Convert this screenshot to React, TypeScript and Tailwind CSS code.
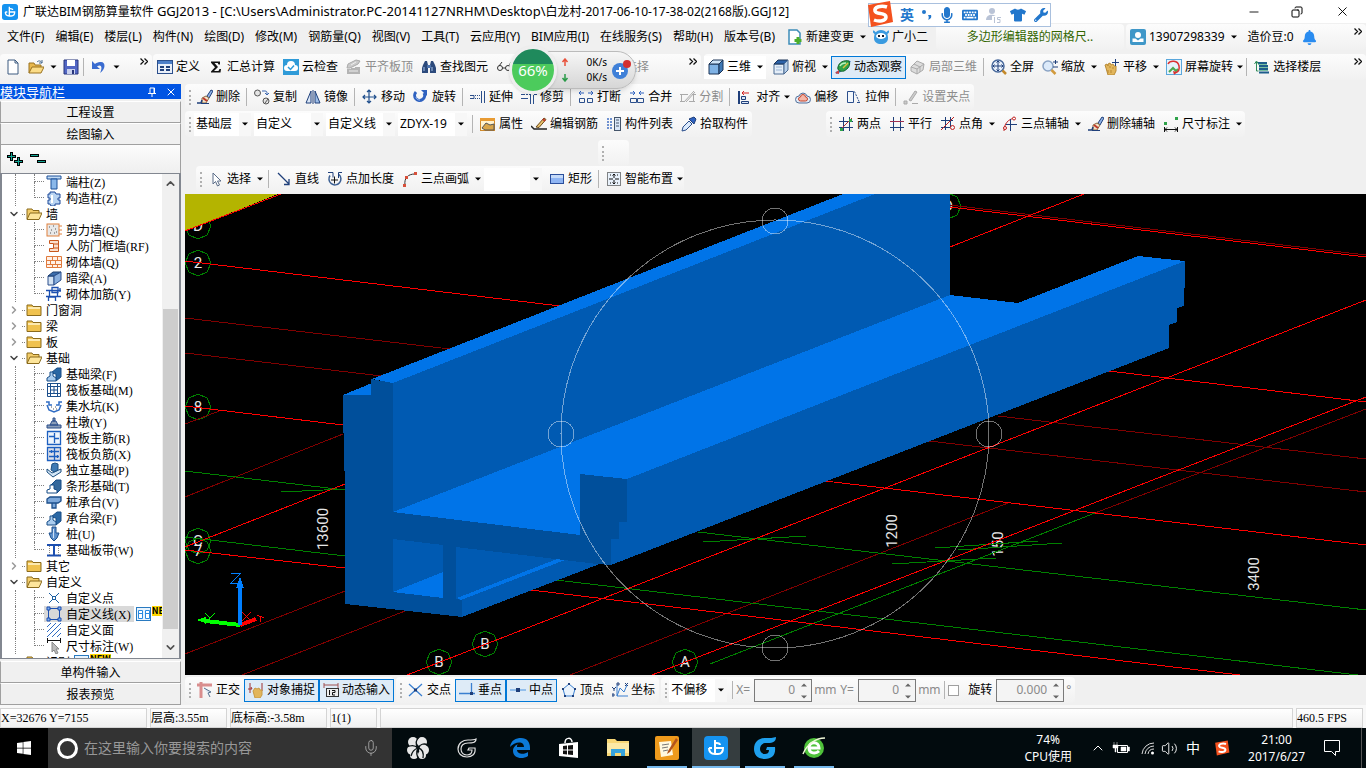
import type { ReactNode } from "react";
import { FaMicrophone, FaKeyboard, FaWrench, FaTshirt, FaWindows, FaBell } from "react-icons/fa";
import { Mic, ChevronUp, ChevronDown, ChevronRight, Volume2, Minus, X, Copy } from "lucide-react";

const navy = "#1f3f7a";

const icons: Record<string, ReactNode> = {
  define: (
    <>
      <rect x="0.5" y="1.5" width="15" height="13" fill="#e8eef8" stroke="#2b4f8c" />
      <path d="M1 3.5h14" stroke="#4d7fc8" strokeWidth="3" />
      <path d="M3 8h4M3 11h4M9 8h4M9 11h4" stroke={navy} strokeWidth="2" />
    </>
  ),
  sigma: <path d="M3 2.500h9v3h-1.500l-.8-1.500H6.500L10 8l-4 4h4.500l1-2H13l-.5 3.500H3V12.500L7 8.200 3 3.800z" fill="#111" />,
  cloudcheck: (
    <>
      <rect width="16" height="16" fill="#2f9bd8" />
      <path d="M4 12a3 3 0 0 1 0-6 4 4 0 0 1 8 0 3 3 0 0 1 0 6z" fill="#fff" />
      <path d="M5 8l2.500 2.500L11 6.500" stroke="#2f9bd8" strokeWidth="1.500" fill="none" />
    </>
  ),
  slab: (
    <>
      <path d="M2 5l8-4 4 1-2 3-8 4H1z" fill="#cacaca" stroke="#aaa" />
      <path d="M1 10h4v-1h4V8h5v7H1z" fill="#b4b4b4" />
      <path d="M3 12h9M5 6l5-3" stroke="#eee" />
    </>
  ),
  find: (
    <>
      <path d="M2 6l2-4h2l1 4v8H1V9zM14 6l-2-4h-2L9 6v8h6V9z" fill="#2c4a7c" />
      <path d="M6 6h4v3H6z" fill="#4d73ad" />
      <path d="M3 8v4M11 8v4" stroke="#a9c4ea" />
    </>
  ),
  glasses: (
    <g fill="none" stroke="#333">
      <circle cx="4" cy="9" r="2.500" />
      <circle cx="12" cy="9" r="2.500" />
      <path d="M6.500 9h3M3 7l3-4M13 7l2-4" />
    </g>
  ),
  cube: (
    <>
      <path d="M1 5h10v10H1z" fill="#7fb2e5" stroke="#1c3556" />
      <path d="M1 5l4-4h10l-4 4z" fill="#cfe4f8" stroke="#1c3556" />
      <path d="M11 5l4-4v10l-4 4z" fill="#3f78b5" stroke="#1c3556" />
    </>
  ),
  top: (
    <>
      <path d="M1 5h10v10H1z" fill="#e5eef8" stroke="#4a6b92" />
      <path d="M1 5l4-4h10l-4 4z" fill="#2c62a8" stroke="#1c3556" />
      <path d="M11 5l4-4v10l-4 4z" fill="#b8d0ea" stroke="#4a6b92" />
      <path d="M3 8h6M3 11h6" stroke="#9bb6d5" />
    </>
  ),
  orbit: (
    <>
      <path d="M1 14c3-1 9-4 14-12" stroke="#2d6ec4" strokeWidth="2" fill="none" />
      <path d="M3 8c1-5 6-7 11-6 2 4-1 8-5 10-4 1-7-1-6-4z" fill="#2fa34a" stroke="#14602a" />
      <path d="M5 7c1-2 3-3 6-3" stroke="#b9f2c0" strokeWidth="1.500" fill="none" />
      <path d="M8 9l5-5" stroke="#e0c040" strokeWidth="1.500" />
      <path d="M0 14l4-3v4z" fill="#c44" />
    </>
  ),
  part3d: (
    <>
      <path d="M1 8l6-6 7 3-1 6-6 4-6-3z" fill="#ddd" stroke="#aaa" />
      <path d="M1 8l6 2 7-5M7 10v5M4 5l6 3v5" stroke="#aaa" fill="none" />
    </>
  ),
  full: (
    <>
      <circle cx="7" cy="7" r="6" fill="#eaf2fc" stroke="#48699c" strokeWidth="1.500" />
      <path d="M7 2v10M2 7h10M5.500 3.500L7 2l1.500 1.500M5.500 10.500L7 12l1.500-1.500M3.500 5.500L2 7l1.500 1.500M10.500 5.500L12 7l-1.500 1.500" stroke={navy} fill="none" />
      <path d="M11.500 11.500l3.500 3.500" stroke="#c48a2c" strokeWidth="2.500" />
    </>
  ),
  zoom: (
    <>
      <circle cx="6" cy="7" r="5" fill="#dceafa" stroke="#8aa3c4" strokeWidth="1.500" />
      <path d="M9.500 11l4 4" stroke="#d19a3d" strokeWidth="2.500" />
      <path d="M11 3h5M13.500 1v4M11 8h5" stroke={navy} />
    </>
  ),
  pan: (
    <>
      <path d="M2 9l-1-3 2-1 1 2V5l2-1 1 2 2-1 1 2 2 0v5l-2 4H4z" fill="#e2b65c" stroke="#b98a35" />
      <path d="M4 11v3M7 11v3M6 7v2M9 8v2" stroke="#b98a35" />
      <path d="M11.500 0v7M8 3.500h7" stroke={navy} />
    </>
  ),
  screenrot: (
    <>
      <rect x="0.500" y="0.500" width="15" height="15" fill="#e6f3fb" stroke="#5aa7dc" />
      <path d="M3 13l4-4 3 3 2-2" stroke="#4ea64e" strokeWidth="2" fill="none" />
      <path d="M2 5C4 1 12 1 13 7c1 4-1 6-4 7" stroke="#dc3030" strokeWidth="1.500" fill="none" />
      <path d="M7 12l1 4 3-3z" fill="#dc3030" />
    </>
  ),
  floors: (
    <>
      <path d="M4 4h9M5 7h9M5 10h9M5 13.500h10" stroke="#1d5d8c" strokeWidth="2" />
      <path d="M2.500 3v9h2M0.500 5l2-3 2 3" stroke="#2f8a5a" fill="none" />
      <path d="M4 5.500h9M5 8.500h9M5 11.500h9" stroke="#7ac0a0" />
    </>
  ),
  broom: (
    <>
      <path d="M10 7l4-6 2 1-4 7z" fill="#8fb2e6" stroke={navy} />
      <path d="M5 9l4-2 3 2-3 5H5z" fill="#f3e3c8" stroke="#8a6a43" />
      <path d="M6 9l4 3" stroke="#c0392b" strokeWidth="2" />
      <path d="M0 14h4l1-3" stroke={navy} strokeWidth="1.500" fill="none" />
      <path d="M4 14.500h8" stroke={navy} />
    </>
  ),
  copy: (
    <g fill="#e4e4e4" stroke="#555">
      <circle cx="3.500" cy="4" r="3" />
      <circle cx="12" cy="12" r="3" />
      <path d="M11 14l3-4" />
      <path d="M8 2h3c2 0 2 1 2 3M11 4l2 2 2-2" fill="none" stroke="#3a66b0" />
    </g>
  ),
  mirror: (
    <>
      <path d="M6 2v12H1z" fill="#dbe7f7" stroke={navy} />
      <path d="M10 2v12h5z" fill="#9dbde6" stroke={navy} />
      <path d="M8 1v14" stroke={navy} />
    </>
  ),
  move: <path d="M7 1v13M1 8h13M5 3l2-2 2 2M5 12l2 2 2-2M3 6L1 8l2 2M12 6l2 2-2 2" stroke="#1f4e8c" strokeWidth="1.200" fill="none" />,
  rotate: (
    <>
      <path d="M3 3a5 5 0 1 0 8 1" stroke="#2f62c0" strokeWidth="3" fill="none" />
      <path d="M8 1h6v6z" fill="#2f62c0" />
      <path d="M3 8c0 2 2 3 4 3" stroke="#9cbcf0" fill="none" />
    </>
  ),
  extend: <path d="M0 6.500h4v3H0M5 6.500h1M7 6.500h1M9 6.500h1M5 9.500h1M7 9.500h1M9 9.500h1M11.500 2v12M14.500 2v12" stroke="#2b4f8c" fill="none" />,
  trim: <path d="M0 5.500h4M5 5.500h2M8 5.500h2M0 9.500h7M9.500 6v9M12.500 6v9M13 5.500h3" stroke="#2b4f8c" fill="none" />,
  break: (
    <>
      <path d="M1.500 9.500h5v4h-5zM9.500 9.500h5v4h-5z" stroke="#2b4f8c" fill="none" />
      <path d="M1 4h5M10 4h5M3 2L1 4l2 2M13 2l2 2-2 2" stroke="#2f62c0" fill="none" />
    </>
  ),
  merge: (
    <>
      <path d="M1.500 9.500h6v4h-6zM8.500 9.500h6v4h-6z" stroke="#2b4f8c" fill="none" />
      <path d="M1 4h5M10 4h5M4 2l2 2-2 2M12 2l-2 2 2 2" stroke="#2f62c0" fill="none" />
    </>
  ),
  split: <path d="M0 5.500h8M1.500 6v6M0 12.500h4M9 12.500h6M13.500 6v6M4 13L14 2M6 13l9-10M12 5.500h4" stroke="#aaa" fill="none" />,
  align: (
    <>
      <path d="M2 2v13" stroke={navy} strokeWidth="2" />
      <path d="M4.500 7.500h4v3h-4zM4.500 12.500h7v2h-7z" fill="#dbe7f7" stroke={navy} />
      <path d="M5 4h7M7 2L5 4l2 2" stroke="#d02020" fill="none" />
    </>
  ),
  offset: (
    <>
      <path d="M4 14a3.500 3.500 0 0 1 0-7 4.200 4.200 0 0 1 8 0 3.500 3.500 0 0 1 0 7z" fill="#e3ecf7" stroke="#52719c" />
      <path d="M5.500 12a2 2 0 0 1 0-4 2.500 2.500 0 0 1 5 0 2 2 0 0 1 0 4z" fill="#f5b7a8" stroke="#c4452d" />
    </>
  ),
  stretch: (
    <>
      <path d="M1.500 13.500v-11h6v11zM11 13.500h3" stroke="#2b4f8c" fill="#f3f7fc" />
      <path d="M8.500 2.500l5 11" stroke="#2b4f8c" strokeDasharray="2 1" />
    </>
  ),
  grip: <path d="M1 12h3v3H1zM6 11l6-9 2 1-6 9zM9 14.500h6" fill="#ccc" stroke="#aaa" />,
  props: (
    <>
      <rect x="0.500" y="2.500" width="14" height="12" fill="#fff2cf" stroke="#d08a2c" />
      <path d="M0 3.500h15" stroke="#e89b33" strokeWidth="3" />
      <path d="M2 12l4-5 4 2 4-1v6H5z" fill="#d9a549" stroke="#555" />
    </>
  ),
  rebar: (
    <>
      <path d="M0 10l3 3h13" stroke="#222" strokeWidth="1.500" fill="none" />
      <path d="M5 11l8-9 2 1.500-7 8z" fill="#e8c06a" stroke="#6b4a1c" />
      <path d="M12 3l2 2" stroke="#c0392b" strokeWidth="2" />
    </>
  ),
  list: (
    <>
      <path d="M1 3h2M4 3h2M1 6h2M4 6h2M1 9h2M4 9h2M1 12h2M4 12h2" stroke="#4472c4" strokeWidth="1.500" />
      <rect x="8.500" y="1.500" width="6" height="13" fill="#dbe7f7" stroke="#44546a" />
      <path d="M10 4h3M10 7h3M10 10h3" stroke="#44546a" />
    </>
  ),
  pick: (
    <>
      <path d="M1 15l1-4 6-6 3 3-6 6z" fill="#dbeafc" stroke="#2b4f8c" />
      <path d="M8 3l5 5 2-5-2-2z" fill="#2f62c0" stroke={navy} />
    </>
  ),
  twopt: (
    <>
      <path d="M5.500 1v14M11.500 1v14M1 5.500h14M1 11.500h14" stroke={navy} />
      <path d="M2 14L14 2" stroke="#b03030" />
      <path d="M2 12h3v3H2zM11 3h3v3h-3z" fill="#2fa34a" />
    </>
  ),
  parallel: (
    <>
      <path d="M4.500 1v14M11.500 1v14M1 11.500h14" stroke={navy} />
      <path d="M1 5.500h14" stroke="#a03050" />
    </>
  ),
  ptangle: (
    <>
      <path d="M5.500 1v13M10.500 1v10M1 4.500h12M1 11.500h9" stroke={navy} />
      <path d="M1 14L14 1" stroke="#c02020" />
      <circle cx="12.500" cy="11.500" r="2" fill="none" stroke="#c02020" />
    </>
  ),
  threeaux: (
    <>
      <path d="M2 15C2 8 6 3 13 2" stroke="#c02020" fill="none" />
      <circle cx="12" cy="2.500" r="1.500" fill="#fff" stroke="#c02020" />
      <circle cx="3" cy="12" r="1.500" fill="#fff" stroke="#c02020" />
      <path d="M8.500 3v12M4 8.500h11" stroke={navy} />
    </>
  ),
  dims: (
    <>
      <path d="M1.500 11v5M14.500 11v5M2 13.500h12M4 11.500l-2 2 2 2M12 11.500l2 2-2 2" stroke="#111" fill="none" />
      <path d="M1 6h3v3H1zM12 1h3v3h-3z" fill="#2fa34a" />
    </>
  ),
  cursor: <path d="M5 2v11l2.500-2.500L9.500 15l2-1-2-4H13z" fill="#fff" stroke="#5b6d88" />,
  line: <path d="M2 2l11 11M13 8v5.500H8" stroke={navy} strokeWidth="1.300" fill="none" />,
  addlen: (
    <>
      <path d="M3 4.500a6 6 0 1 0 9-1" fill="none" stroke="#3b5f93" strokeWidth="1.500" />
      <path d="M7.500 5.500v7M4 9h7" stroke="#111" />
      <path d="M1 1.500h5v5M11.500 7V1.500H15" stroke={navy} fill="none" />
    </>
  ),
  arc: (
    <>
      <path d="M3 14C2 7 6 3 13 3" stroke="#333" fill="none" />
      <path d="M1 13h3v3H1zM3 5h3v3H3zM12 1h3v3h-3z" fill="#d7503a" />
    </>
  ),
  rect: (
    <>
      <rect x="1.500" y="3.500" width="13" height="9" fill="#8fb5f3" stroke="#2b4f9c" />
      <path d="M2 4h12v3H2z" fill="#c5daf8" />
    </>
  ),
  smart: (
    <>
      <rect x="1.500" y="1.500" width="13" height="13" fill="#e8f1fb" stroke="#111" strokeDasharray="1 1" />
      <path d="M8 3v4M8 9v4M3 8h4M9 8h4M6.500 4.500L8 3l1.500 1.500M6.500 11.500L8 13l1.500-1.500M4 4h1M11 4h1M4 12h1M11 12h1" stroke="#111" fill="none" />
    </>
  ),
  ortho: (
    <>
      <path d="M0 3h15M4 0v16" stroke="#d98e8e" strokeWidth="3" />
      <path d="M7 6l7 4-3 1 2 4" fill="#dfe8f3" stroke="#55708f" />
    </>
  ),
  snap: (
    <>
      <path d="M2 1v10M14 1v8M0 7h4l-1-2" stroke="#a03030" fill="none" />
      <path d="M5 9l2-3 2 1 2-1 1 2 2 0v5l-2 3H7z" fill="#e2b65c" stroke="#c79a45" />
    </>
  ),
  dyn: (
    <>
      <path d="M1 6V1M15 6V1M1 3h14" stroke="#a05050" />
      <rect x="3.500" y="6.500" width="12" height="8" fill="#eee" stroke="#333" />
      <path d="M6.500 8v5M9 8.500h3v2H9.500V13H12" stroke="#111" fill="none" />
    </>
  ),
  cross: (
    <>
      <path d="M1 2l13 12M14 2L1 14" stroke="#3a7fd0" strokeWidth="1.300" />
      <path d="M6 6.500h3v3H6z" fill={navy} />
    </>
  ),
  perp: (
    <>
      <path d="M0 11.500h16M12.500 1v11" stroke="#3a7fd0" strokeWidth="1.300" />
      <path d="M11 10h3v3h-3z" fill={navy} />
    </>
  ),
  mid: (
    <>
      <path d="M0 8h16" stroke="#7ab0e8" strokeWidth="1.500" />
      <path d="M6 6h4v4H6z" fill={navy} />
    </>
  ),
  vertex: (
    <>
      <path d="M8 2l6 5-2 7H4L2 7z" fill="#eaf3fc" stroke="#3a7fd0" />
      <path d="M7 1h2v2H7zM13 6h2v2h-2zM1 6h2v2H1zM3 13h2v2H3zM11 13h2v2h-2z" fill={navy} />
    </>
  ),
  coord: (
    <>
      <path d="M5 3v11h11M5 14l3-8 4 4 3-7" stroke="#3a7fd0" fill="none" />
      <path d="M0 5l2 2v2M4 5L2 7M5 1h2v2H5zM0 12h2v2H0zM13 1l3 3M16 1l-3 3" stroke={navy} fill="none" />
    </>
  ),
  newfile: <path d="M3 1h7l3 3v11H3zM10 1v3h3" fill="#fff" stroke="#3c5a80" />,
  open: (
    <>
      <path d="M1 14V4h5l1 2h6v3" fill="#e8b84e" stroke="#9a7320" />
      <path d="M1 14l3-6h12l-3 6z" fill="#fbdc87" stroke="#9a7320" />
      <path d="M9 3c2-2 4-1 5 1M14 1v3h-3" stroke="#44688f" fill="none" />
    </>
  ),
  save: (
    <>
      <path d="M1 1h14v14H1z" fill="#5266c4" stroke="#26347a" />
      <path d="M4 1h8v6H4z" fill="#fff" />
      <path d="M4 10h8v5H4z" fill="#c9d1ee" />
      <path d="M9 11h2v4H9z" fill="#26347a" />
    </>
  ),
  undo: <path d="M1 2v8h8L6 7.500C10 4.500 12 8 9 14c6-4 6-12 0-11C7 3 5 4 4 5z" fill="#3a6cd0" />,
  change: (
    <>
      <path d="M2 1h8l3 3v11H2z" fill="#fff" stroke="#3c8cb8" strokeWidth="1.500" />
      <path d="M11 8v7M7.500 11.500h7" stroke="#4caf2a" strokeWidth="3" />
    </>
  ),
  guang: (
    <>
      <path d="M8 1c5 0 7 4 7 8 0 4-3 6-7 6s-7-2-7-6c0-4 2-8 7-8z" fill="#3a9be0" />
      <path d="M0 2l3 3M16 2l-3 3" stroke="#3a9be0" strokeWidth="2" />
      <ellipse cx="8" cy="7" rx="5" ry="3" fill="#fff" />
      <path d="M5 7h2M9 7h2" stroke="#123" strokeWidth="2" />
    </>
  ),
  user: (
    <>
      <rect width="16" height="16" rx="2" fill="#3f97c8" />
      <circle cx="8" cy="6" r="3" fill="#fff" />
      <path d="M2.500 13V9.500h3l2.500 2 2.500-2h3V13z" fill="#fff" />
    </>
  ),
  // tree
  folder: (
    <>
      <path d="M1 13.500V3h5l1 1.500h8v9z" fill="#f0c24f" stroke="#8a6a1c" />
      <path d="M2 6h12" stroke="#fdeab0" strokeWidth="2" />
    </>
  ),
  folderOpen: (
    <>
      <path d="M1 13V3h5l1 1.500h6V7" fill="#f3cd6b" stroke="#8a6a1c" />
      <path d="M1 13.500L4 7h12l-3 6.500z" fill="#fde59b" stroke="#8a6a1c" />
    </>
  ),
  column: (
    <>
      <path d="M1 2h14v3H1z" fill="#c2dbf5" stroke="#1c5199" />
      <path d="M5 5h6v10H5z" fill="#8ab8ea" stroke="#1c5199" />
    </>
  ),
  column2: (
    <>
      <path d="M4 2h5l1 2h4v4h-2v2h2v4H9v2H5l-1-2H2v-4h2V8H2V4h2z" fill="#b9d4f2" stroke="#1c4899" />
      <path d="M6 5v8" stroke="#fff" strokeWidth="2" />
    </>
  ),
  shear: (
    <>
      <rect x="1" y="2" width="12" height="12" fill="#e8e8e8" stroke="#e0803c" />
      <path d="M3 5h1M7 4h1M5 8h1M9 7h1M4 11h1M8 11h1M10 10h1" stroke="#555" />
      <path d="M13 4h3M13 8h3M13 12h3" stroke="#e0803c" />
    </>
  ),
  doorwall: <path d="M3.500 2.500h9v11h-9v-3h4v-5h-4zM8 6h4M8 10h4" fill="#fbe0cc" stroke="#c8571c" />,
  brick: <path d="M0.500 2.500h15v11h-15zM1 6.500h14M1 10.500h14M6.500 3v3M11.500 3v3M4.500 7v3M9.500 7v3M6.500 11v3M11.500 11v3" fill="#fff0e6" stroke="#e07a3c" />,
  beam: (
    <>
      <path d="M2 6h6v9H2z" fill="#d5e3f3" stroke="#2b4f8c" />
      <path d="M2 6l5-4h8L8 6z" fill="#3b6cab" stroke="#1c3e70" />
      <path d="M8 6l7-4v8l-7 5z" fill="#88aede" stroke="#2b4f8c" />
    </>
  ),
  rebarwall: <path d="M0 4.500h15M0 10.500h15M3.500 4v6M11.500 4v6M6 1.500h6v5H6zM2.500 15v-4h7v4M14 2v4" stroke="#1c4fb0" strokeWidth="1.300" fill="none" />,
  fbeam: (
    <>
      <path d="M5 7l6-5h4v9l-5 4V8z" fill="#2a67a4" stroke="#164c86" />
      <path d="M1 15v-3l3-2V6h3v4l3 2v3z" fill="#a9ccef" stroke="#164c86" />
    </>
  ),
  raft: <path d="M1.500 1.500h13v13h-13zM4.500 4.500h7v7h-7zM4.500 1v14M11.500 1v14M1 4.500h14M1 11.500h14M8 5v6M5 8h6" stroke="#1c4f8c" fill="none" />,
  pit: (
    <>
      <path d="M0 4h3v3h3M16 4h-3v3h-3M1 7l2 5 5 2 5-2 2-5" stroke="#2f6cc4" fill="none" strokeWidth="1.500" />
      <path d="M5 9h1M9 9h1M7 11h1M10 11h1" stroke="#555" />
    </>
  ),
  pier: <path d="M1 11h14v3H1zM4 11l2-4h4l2 4zM7 4h2v3H7z" fill="#8a9db8" stroke="#2b4f8c" />,
  mainbar: <path d="M1.500 1.500h13v13h-13zM8.500 3v10M3 6.500h5M8 8.500h5" stroke="#1c5fc0" strokeWidth="1.300" fill="#eef5fd" />,
  negbar: <path d="M1.500 1.500h13v13h-13zM8.500 2v12M3 5.500h10M3 10.500h10M5.500 4v3M11.500 9v3" stroke="#1c5fc0" strokeWidth="1.300" fill="#dcdfe8" />,
  isolated: (
    <>
      <path d="M1 7l5 4 9-4v3l-8 5-6-5z" fill="#d3e6f6" stroke="#1c4f80" />
      <path d="M6 2l3-1 3 1v6l-4 2-3-2z" fill="#3f7ab4" stroke="#1c4f80" />
    </>
  ),
  strip: (
    <>
      <path d="M5 7l5-5h5v9l-4 4z" fill="#34689c" stroke="#164c86" />
      <path d="M1 15v-3l3-1V7h4v4l3 1v3z" fill="#fff" stroke="#164c86" />
    </>
  ),
  cap: <path d="M1 5l3-2h11v4l-3 2H1zM6 9h4v5H6z" fill="#7da8da" stroke="#1c4f8c" strokeWidth="1.300" />,
  pile: (
    <>
      <path d="M6 1h4v6h3l-2 5-3 3-3-3-2-5h3z" fill="#5c8fcb" stroke="#1c4f8c" />
      <path d="M7.500 3v9" stroke="#cfe2f7" />
    </>
  ),
  band: (
    <>
      <path d="M1 3h14M1 13.500h14M8 3v10" stroke="#1c4fb0" strokeWidth="2" fill="none" />
      <path d="M3.500 4v9M12.500 4v9" stroke="#888" strokeDasharray="1 1" />
    </>
  ),
  cpoint: (
    <>
      <path d="M3 3l10 10M13 3L3 13" stroke="#1c5fa0" />
      <rect x="6.500" y="6.500" width="3" height="3" fill="#fff" stroke="#1c5fa0" />
    </>
  ),
  cline: (
    <>
      <path d="M2.500 2.500h11v11h-11z" fill="none" stroke="#1c4fb0" />
      <path d="M1 1h3v3H1zM12 1h3v3h-3zM1 12h3v3H1zM12 12h3v3h-3z" fill="#7fb0ee" stroke="#1c4fb0" />
    </>
  ),
  cface: <path d="M1 5l4-4M1 10l9-9M1 15L15 1M6 15l9-9M11 15l4-4" stroke="#2f6cc4" />,
  cdim: (
    <>
      <path d="M1.500 0v5M14.500 0v5M1 2.500h14" stroke="#111" />
      <path d="M6 4v10l2-2 2 4 2-1-2-4h3z" fill="#bbb" stroke="#888" />
    </>
  ),
  book: (
    <>
      <rect x="0.500" y="1.500" width="14" height="13" fill="#e8f4fe" stroke="#2a7ac0" />
      <path d="M2.500 4.500h4v8h-4zM9.500 4.500h4v8h-4zM3 7.500h3M10 7.500h3" fill="#fff" stroke="#2a8ae0" />
    </>
  ),
};

function Icon({ name }: { name: string }) {
  return (
    <svg viewBox="0 0 16 16" className="h-4 w-4 shrink-0" aria-hidden="true">
      {icons[name]}
    </svg>
  );
}

function Caret({ className = "w-3" }: { className?: string }) {
  return (
    <svg viewBox="0 0 7 4" className={`h-1 shrink-0 ${className}`} aria-hidden="true">
      <path d="M0.500 0.500h6L3.500 3.500z" fill="#000" />
    </svg>
  );
}

type ToolProps = { icon: string; label: string; arrow?: boolean; tight?: boolean; dim?: boolean; on?: boolean; white?: boolean };

function Tool({ icon, label, arrow, tight, dim, on, white }: ToolProps) {
  return (
    <button
      type="button"
      disabled={dim}
      className={`flex h-[23px] shrink-0 items-center gap-[3px] pl-1 ${arrow || tight ? "" : "pr-1"} ${dim ? "text-[#8d8d8d]" : ""} ${
        on ? "bg-[#deebf7] outline-1 -outline-offset-1 outline-[#0078d7]" : ""
      } ${white ? "mr-[3px] bg-white" : ""}`}
    >
      <Icon name={icon} />
      <span>{label}</span>
      {arrow && <Caret />}
      {tight && <Caret className="w-2" />}
    </button>
  );
}

function Sep() {
  return <span className="mx-[2px] h-[18px] w-[2px] shrink-0 border-l border-[#b4b4b4]" />;
}

function Grip() {
  return <span className="mr-[2px] ml-1 h-[15px] w-[2px] shrink-0 border-l-2 border-dotted border-[#b0b0b0]" />;
}

function Bar({ className = "", children }: { className?: string; children?: ReactNode }) {
  return (
    <div className={`flex h-[26px] shrink-0 items-center rounded-sm bg-gradient-to-b from-[#fcfcfc] to-[#f1f1f1] ${className}`}>{children}</div>
  );
}

function Combo({ label, value, className }: { label: string; value: string; className: string }) {
  return (
    <label className={`relative mr-[3px] flex h-[23px] shrink-0 items-center bg-white ${className}`}>
      <select aria-label={label} className="h-full w-full appearance-none bg-transparent pl-[2px] outline-none">
        <option>{value}</option>
      </select>
      <span className="pointer-events-none absolute right-0 flex h-[23px] items-center bg-[#f7f7f7]">
        <Caret />
      </span>
    </label>
  );
}

function Spin({ label, value, className }: { label: string; value: string; className: string }) {
  return (
    <span className={`flex h-[23px] shrink-0 items-center border border-[#7a7a7a] bg-[#f4f4f4] text-[#8a8a8a] ${className}`}>
      <input aria-label={label} defaultValue={value} className="w-full min-w-0 bg-transparent text-right outline-none" />
      <svg viewBox="0 0 16 21" className="h-[21px] w-4 shrink-0">
        <path d="M6 6.500h6L9 3.500zM6 15.500h6l-3 3z" fill="#666" />
      </svg>
    </span>
  );
}

function More() {
  return (
    <svg viewBox="0 0 8 7" className="mt-1 mr-1 h-[7px] w-2 shrink-0 self-start">
      <path d="M0.500 0.500l3 3-3 3M4.500 0.500l3 3-3 3" stroke="#111" strokeWidth="1.300" fill="none" />
    </svg>
  );
}

const menus = ["文件(F)", "编辑(E)", "楼层(L)", "构件(N)", "绘图(D)", "修改(M)", "钢筋量(Q)", "视图(V)", "工具(T)", "云应用(Y)", "BIM应用(I)", "在线服务(S)", "帮助(H)", "版本号(B)"];

type Leaf = { icon: string; name: string; hotkey?: string; selected?: boolean };
type Group = { name: string; open?: boolean; items?: Leaf[] };

const tree: Group[] = [
  {
    name: "",
    open: true,
    items: [
      { icon: "column", name: "端柱", hotkey: "Z" },
      { icon: "column2", name: "构造柱", hotkey: "Z" },
    ],
  },
  {
    name: "墙",
    open: true,
    items: [
      { icon: "shear", name: "剪力墙", hotkey: "Q" },
      { icon: "doorwall", name: "人防门框墙", hotkey: "RF" },
      { icon: "brick", name: "砌体墙", hotkey: "Q" },
      { icon: "beam", name: "暗梁", hotkey: "A" },
      { icon: "rebarwall", name: "砌体加筋", hotkey: "Y" },
    ],
  },
  { name: "门窗洞" },
  { name: "梁" },
  { name: "板" },
  {
    name: "基础",
    open: true,
    items: [
      { icon: "fbeam", name: "基础梁", hotkey: "F" },
      { icon: "raft", name: "筏板基础", hotkey: "M" },
      { icon: "pit", name: "集水坑", hotkey: "K" },
      { icon: "pier", name: "柱墩", hotkey: "Y" },
      { icon: "mainbar", name: "筏板主筋", hotkey: "R" },
      { icon: "negbar", name: "筏板负筋", hotkey: "X" },
      { icon: "isolated", name: "独立基础", hotkey: "P" },
      { icon: "strip", name: "条形基础", hotkey: "T" },
      { icon: "cap", name: "桩承台", hotkey: "V" },
      { icon: "fbeam", name: "承台梁", hotkey: "F" },
      { icon: "pile", name: "桩", hotkey: "U" },
      { icon: "band", name: "基础板带", hotkey: "W" },
    ],
  },
  { name: "其它" },
  {
    name: "自定义",
    open: true,
    items: [
      { icon: "cpoint", name: "自定义点" },
      { icon: "cline", name: "自定义线", hotkey: "X", selected: true },
      { icon: "cface", name: "自定义面" },
      { icon: "cdim", name: "尺寸标注", hotkey: "W" },
    ],
  },
];

function NewTag() {
  return (
    <>
      <Icon name="book" />
      <span className="h-[10px] self-start bg-[#ffd800] text-[9px] leading-[10px] font-bold">NEW</span>
    </>
  );
}

function LeafRow({ leaf, last }: { leaf: Leaf; last: boolean }) {
  return (
    <li className="flex h-4 items-center">
      <span className="ml-[13px] h-4 w-[19px] shrink-0 border-l border-dotted border-[#808080]" />
      <span className="w-[10px] shrink-0">
        <span className="block h-2 border-b border-l border-dotted border-[#808080]" />
        <span className={`block h-2 ${last ? "" : "border-l border-dotted border-[#808080]"}`} />
      </span>
      <button type="button" className={`flex h-4 shrink-0 items-center gap-1 pl-[2px] ${leaf.selected ? "mr-[2px] bg-[#d9d9d9] pr-[3px]" : ""}`}>
        <Icon name={leaf.icon} />
        <span>
          {leaf.name}
          {leaf.hotkey && <span className="font-['Liberation_Serif',serif]">({leaf.hotkey})</span>}
        </span>
      </button>
      {leaf.selected && <NewTag />}
    </li>
  );
}

function GroupRow({ group }: { group: Group }) {
  return (
    <li className="flex h-4 items-center">
      <span className="ml-[6px] flex w-[14px] shrink-0">
        {group.open ? <ChevronDown size={12} strokeWidth={3} color="#444" /> : <ChevronRight size={12} strokeWidth={3} color="#999" />}
      </span>
      <span className="mr-px w-[3px] shrink-0 border-b border-dotted border-[#808080]" />
      <Icon name={group.open ? "folderOpen" : "folder"} />
      <span className="ml-1">{group.name}</span>
    </li>
  );
}

function SideButton({ children }: { children: ReactNode }) {
  return (
    <button type="button" className="h-[22px] shrink-0 border border-[#a0a0a0] border-t-white bg-[#f0f0f0] text-center">
      {children}
    </button>
  );
}

function Sidebar() {
  return (
    <aside className="mr-1 flex w-[181px] shrink-0 flex-col bg-[#f0f0f0] font-['Noto_Sans_CJK_SC',sans-serif]">
      <div className="mb-[2px] flex h-[15px] shrink-0 items-center bg-[#0054e3] text-[13px] leading-[15px] text-white">
        <span className="flex-1">模块导航栏</span>
        <button type="button" aria-label="固定" className="mr-2">
          <svg viewBox="0 0 10 10" className="h-[10px] w-[10px]">
            <path d="M3 1h4.500v5M3 1v5M1 6.500h8M5 7v3M7 1v5" stroke="#fff" fill="none" />
          </svg>
        </button>
        <button type="button" aria-label="关闭" className="mr-1">
          <X size={12} strokeWidth={2} />
        </button>
      </div>
      <SideButton>工程设置</SideButton>
      <SideButton>绘图输入</SideButton>
      <div className="flex h-7 shrink-0 items-center border-x border-[#a0a0a0] bg-gradient-to-b from-[#fcfcfc] to-[#efefef] pl-[6px]">
        <svg viewBox="0 0 40 16" className="h-4 w-10">
          <path d="M4.500 1v9M0 5.500h9M11.500 6v9M7 10.500h9M23 4.500h9M30 10.500h9" stroke="#000" strokeWidth="3" />
          <path d="M4.500 2v7M1 5.500h7M11.500 7v7M8 10.500h7M24 4.500h7M31 10.500h7" stroke="#12a594" strokeWidth="1" />
        </svg>
      </div>
      <div className="mb-[2px] flex min-h-0 flex-1 border border-r-2 border-l-2 border-[#828790] bg-white">
        <ul className="min-w-0 flex-1 overflow-hidden whitespace-nowrap">
          {tree.map((group, i) => [
            group.name && <GroupRow key={group.name} group={group} />,
            ...(group.items ?? []).map((leaf, j) => <LeafRow key={`${i}-${leaf.name}`} leaf={leaf} last={j === group.items!.length - 1} />),
          ])}
          <li className="flex h-4 items-center">
            <span className="ml-6" />
            <Icon name="folder" />
            <span className="mr-1 ml-1">识别</span>
            <NewTag />
          </li>
        </ul>
        <div className="flex w-[17px] shrink-0 flex-col items-center bg-[#f0f0f0]">
          <ChevronUp size={13} strokeWidth={3} color="#505050" className="mt-[3px]" />
          <div className="mt-[119px] w-[15px] flex-1 bg-[#cdcdcd]" />
          <ChevronDown size={13} strokeWidth={3} color="#505050" className="mt-3 mb-1" />
        </div>
      </div>
      <SideButton>单构件输入</SideButton>
      <SideButton>报表预览</SideButton>
    </aside>
  );
}

const redLines = [
  [185, 261, 560, 306], [185, 406, 343, 425], [185, 547, 345, 484], [185, 550, 345, 568], [531, 590, 1240, 675],
  [407, 675, 1366, 300], [652, 675, 1366, 397], [825, 481, 1366, 545], [1109, 371, 1366, 402], [950, 207, 1366, 257],
  [950, 247, 1084, 194], [185, 231, 281, 194],
];
const darkLines = [
  [185, 318, 450, 349], [185, 353, 382, 376], [185, 424, 222, 410], [185, 497, 343, 434], [185, 654, 345, 591],
  [242, 675, 405, 611], [570, 675, 1008, 503], [929, 441, 1366, 492], [998, 416, 1366, 459], [950, 205, 1366, 255], [1095, 513, 1366, 409],
];
const greenLines = [
  [185, 471, 345, 490], [281, 492, 345, 489], [185, 537, 345, 556], [556, 580, 1366, 676], [698, 532, 1366, 610], [703, 542, 806, 536],
  [892, 564, 996, 558], [935, 548, 1038, 541], [958, 550, 1062, 543], [710, 664, 1095, 513],
];
const axisMarks: [number, number, string][] = [
  [198, 226, "D"], [198, 263, "2"], [198, 407, "8"], [198, 541, "C"], [198, 551, "7"], [485, 644, "B"], [439, 662, "B"], [685, 662, "A"], [948, 206, "D"],
];
const lengths: [number, number, string][] = [[328, 529, "13600"], [897, 531, "1200"], [1003, 544, "150"], [1259, 574, "3400"]];

function Lines({ data, color }: { data: number[][]; color: string }) {
  return (
    <g stroke={color}>
      {data.map(([x1, y1, x2, y2], i) => (
        <line key={i} x1={x1} y1={y1} x2={x2} y2={y2} />
      ))}
    </g>
  );
}

function Scene() {
  return (
    <svg viewBox="185 194 1181 481" preserveAspectRatio="xMinYMin slice" className="my-[2px] block min-h-0 w-full flex-1 bg-black" shapeRendering="crispEdges">
      <g fill="#e6e6e6" fontFamily="Roboto, sans-serif" textAnchor="middle">
        {axisMarks.map(([x, y, t], i) => (
          <g key={i}>
            <polygon
              points={`${x},${y - 13} ${x + 9},${y - 9} ${x + 13},${y} ${x + 9},${y + 9} ${x},${y + 13} ${x - 9},${y + 9} ${x - 13},${y} ${x - 9},${y - 9}`}
              fill="none"
              stroke="#008000"
            />
            <text x={x} y={y + 5} fontSize="15">{t}</text>
          </g>
        ))}
        {lengths.map(([x, y, t]) => (
          <text key={t} transform={`translate(${x} ${y}) rotate(-90)`} fontSize="15">{t}</text>
        ))}
      </g>
      <path d="M185 194h93L185 231z" fill="#b4b400" />
      <Lines data={darkLines} color="#800000" />
      <Lines data={greenLines} color="#008000" />
      <Lines data={redLines} color="#ff0000" />

      {/* beam solid: lit tops, side faces, then the end section */}
      <path d="M393 383L875 194H950V295L393 512z" fill="#005ab2" />
      <path d="M372 379L843 194H875L393 383zM343 395L372 383V395z" fill="#0074e8" />
      <path d="M393 512L950 295L1018 303L1138 256L1185 261L627 480L580 535z" fill="#0074e8" />
      <path d="M627 479L1185 261V288H1184V306L1177 308V322L1169 325V348L611 565V539L619 522z" fill="#005ab2" />
      <path d="M393 538L600 562L597 565L462 617L393 600z" fill="#005ab2" />
      <path d="M393 592L443 572V598zM457 598L557 559L565 560L461 600z" fill="#0074e8" />
      <path
        fillRule="evenodd"
        d="M343 395H371V379L393 383V512L580 535V474L627 479V522H619V539H611V565L597 564L456 547V599L462 600V617L345 604V471H344V433H343zM393 539V592L443 598V545z"
        fill="#004f9b"
      />

      <g fill="none" stroke="#ffffff" strokeOpacity="0.450">
        <circle cx="775" cy="434" r="214" />
        <circle cx="775" cy="221" r="13" />
        <circle cx="775" cy="648" r="13" />
        <circle cx="561" cy="434" r="13" />
        <circle cx="989" cy="434" r="13" />
      </g>

      <path d="M240 625L206 621" stroke="#00ff00" strokeWidth="4" />
      <path d="M196 620L206 617V623z" fill="#00ff00" />
      <path d="M205 613L210 618L215 613M210 618L205 624" fill="none" stroke="#00ff00" />
      <path d="M240 625L256 619" stroke="#ff0000" strokeWidth="4" />
      <path d="M257 615L264 618M260 616V622M242 612L251 621M251 612L242 621" fill="none" stroke="#ff0000" />
      <path d="M240 625V586" stroke="#007fff" strokeWidth="4" />
      <path d="M236 588L240 577L244 588z" fill="#007fff" />
      <path d="M231 573H241L231 583H241" fill="none" stroke="#007fff" />
    </svg>
  );
}

function SogouLogo({ className }: { className: string }) {
  return (
    <svg viewBox="0 0 28 28" className={className} aria-hidden="true">
      <path d="M2 5L24 1L27 22L5 27z" fill="#f4511e" />
      <path d="M21 7C15 5 8 7 9 11C10 15 20 12 20 17C20 21 13 22 8 20" stroke="#fff" strokeWidth="3.500" fill="none" />
    </svg>
  );
}

function ImeBar() {
  return (
    <div className="absolute top-[3px] left-[868px] flex h-6 w-[183px] items-center gap-2 border border-[#a9c0de] bg-white pr-1 pl-[31px] text-[#2277cc]">
      <SogouLogo className="absolute -top-1 -left-[3px] h-7 w-7" />
      <span className="text-sm font-bold">英</span>
      <svg viewBox="0 0 10 12" className="h-3 w-[10px] shrink-0">
        <circle cx="2" cy="3" r="2" fill="#2277cc" />
        <path d="M6 6h3c1 3-1 4-3 5 1-2 1-3 0-5z" fill="#2277cc" />
      </svg>
      <FaMicrophone className="h-4 w-[14px] shrink-0" />
      <FaKeyboard className="h-4 w-4 shrink-0" />
      <svg viewBox="0 0 16 16" className="h-4 w-4 shrink-0">
        <circle cx="6" cy="4" r="3" fill="#b9c3d6" />
        <path d="M0 13c0-7 11-7 12 0z" fill="#b9c3d6" />
        <path d="M6 9h10v7H6z" fill="#fff" />
        <path d="M8.500 10v6M15 10.500h-3.500v2H14v3h-3" stroke="#b9c3d6" fill="none" />
      </svg>
      <FaTshirt className="h-[14px] w-4 shrink-0" />
      <FaWrench className="h-[14px] w-[14px] shrink-0" />
    </div>
  );
}

function SpeedBall() {
  return (
    <div className="absolute top-[46px] left-[509px] flex h-12 items-center">
      <div className="z-10 flex h-12 w-12 items-center justify-center rounded-full border-3 border-[#eee] bg-gradient-to-b from-[#1f8a5c] from-35% to-[#4ccb5c] to-35% text-[15px] text-white shadow">66%</div>
      <div className="-ml-6 flex h-[38px] w-[103px] items-center rounded-r-full border border-[#bbb] bg-gradient-to-b from-[#f6f6f6] to-[#d6d6d6] pr-1 pl-[27px] shadow-md">
        <svg viewBox="0 0 8 24" className="h-6 w-2 shrink-0">
          <path d="M4 8V1M1.500 4L4 1l2.500 3" stroke="#e8503a" strokeWidth="1.500" fill="none" />
          <path d="M4 16v7M1.500 20L4 23l2.500-3" stroke="#2a9a48" strokeWidth="1.500" fill="none" />
        </svg>
        <div className="flex-1 pr-1 text-right text-[10px] leading-[15px]">
          <div>0K/s</div>
          <div>0K/s</div>
        </div>
        <svg viewBox="0 0 20 20" className="h-5 w-5 shrink-0">
          <circle cx="9" cy="11" r="8" fill="#3f80d8" />
          <path d="M9 7v8M5 11h8" stroke="#fff" strokeWidth="2" />
          <circle cx="16" cy="4" r="4" fill="#d43030" />
        </svg>
      </div>
    </div>
  );
}

function AppLogo({ className }: { className: string }) {
  return (
    <svg viewBox="0 0 24 24" className={className} aria-hidden="true">
      <rect width="24" height="24" rx="4" fill="#1593f0" />
      <path d="M11 4v14M5 12c0 4 2 6 6 6h3c3 0 5-2 5-6h-8M5 12h3M12 7c3 0 4 1 4 2" stroke="#fff" strokeWidth="2" fill="none" />
    </svg>
  );
}

const taskIcons: { label: string; state?: "open" | "active"; art: ReactNode }[] = [
  {
    label: "花瓣",
    art: (
      <svg viewBox="0 0 24 24" className="h-6 w-6">
        <g fill="#e8e8e8">
          <circle cx="7" cy="6" r="5" />
          <circle cx="16" cy="6" r="5" />
          <circle cx="6" cy="14" r="5" />
          <circle cx="18" cy="14" r="5" />
          <circle cx="8" cy="19" r="4" />
          <circle cx="16" cy="19" r="4" />
        </g>
        <path d="M12 12C9 9 5 9 1 11M12 12C9 8 10 4 13 1M12 12c2-4 6-5 10-3M12 12c4 1 6 4 5 10M12 12c-2 4-2 7 1 11M12 12c-3 1-6 4-7 8" stroke="#0a1214" strokeWidth="1.300" fill="none" />
      </svg>
    ),
  },
  {
    label: "广联达",
    art: (
      <svg viewBox="0 0 24 24" className="h-6 w-6">
        <path d="M21 3c0 4-4 4-8 4-5 0-7 3-7 6 0 4 3 6 6 6s5-2 5-5h-4l1-2h6c1 6-3 9-8 9-6 0-9-4-9-8 0-6 5-9 10-9 4 0 6 0 8-1z" stroke="#e0e0e0" strokeWidth="1.200" fill="none" />
      </svg>
    ),
  },
  {
    label: "Edge",
    art: (
      <svg viewBox="0 0 22 22" className="h-[22px] w-[22px]">
        <path d="M1 10C2 3 7 1 12 1c6 0 9 4 9 10v2H8c0 4 7 5 11 2v4C13 23 4 21 4 14c0-4 3-6 5-7-1 1-1 2-1 3h7c0-7-10-5-14 0z" fill="#0c79d8" />
      </svg>
    ),
  },
  {
    label: "应用商店",
    art: (
      <svg viewBox="0 0 22 22" className="h-[22px] w-[22px]">
        <path d="M1 7l19-2v16l-19-2z" fill="#fff" />
        <path d="M7 6C7 0 14 0 14 5" stroke="#fff" strokeWidth="1.500" fill="none" />
        <path d="M5 9l4-.5v4H5zM10 8.500l5-.5v4.500h-5zM5 13.500h4v4L5 17zM10 13.500h5V18l-5-.5z" fill="#111" />
      </svg>
    ),
  },
  {
    label: "文件资源管理器",
    art: (
      <svg viewBox="0 0 22 20" className="h-5 w-[22px]">
        <path d="M0 1h8l2 2h12v15H0z" fill="#f8d775" />
        <path d="M0 5h22v10H0z" fill="#fce9a5" />
        <path d="M4 18v-7h14v7h-4v-3H8v3z" fill="#36a3dc" />
      </svg>
    ),
  },
  {
    label: "记事",
    state: "open",
    art: (
      <svg viewBox="0 0 24 24" className="h-6 w-6">
        <rect width="24" height="24" rx="2" fill="#ee9a1c" />
        <path d="M4 6l12-1 2 14-12 2z" fill="#fff8e0" />
        <path d="M7 9l7-1M7 12l6-1M8 15l5-1" stroke="#777" />
        <path d="M21 2l-8 13-1 3 3-2L23 4z" fill="#b3541e" />
      </svg>
    ),
  },
  { label: "GGJ2013", state: "active", art: <AppLogo className="h-6 w-6" /> },
  {
    label: "广联达G+",
    state: "open",
    art: (
      <svg viewBox="0 0 24 24" className="h-6 w-6">
        <path d="M23 1c0 6-5 6-10 6-4 0-6 3-6 6 0 3 2 5 5 5 2 0 4-1 4-4h-3l1-3h8c1 8-3 12-10 12C4 23 1 18 1 13 1 5 7 2 13 2c4 0 7 0 10-1z" fill="#1fa0ee" />
      </svg>
    ),
  },
  {
    label: "浏览器",
    state: "open",
    art: (
      <svg viewBox="0 0 24 24" className="h-6 w-6">
        <circle cx="12" cy="12" r="10" fill="#4fc23a" />
        <path d="M7 12h10c0-7-10-7-10 0 0 6 7 6 10 3" stroke="#fff" strokeWidth="3" fill="none" />
        <path d="M1 18C5 8 14 2 23 2" stroke="#f0f8d8" strokeWidth="1.500" fill="none" />
      </svg>
    ),
  },
];

function TaskButtons({ from, to }: { from: number; to: number }) {
  return taskIcons.slice(from, to).map((item) => (
    <button
      type="button"
      key={item.label}
      aria-label={item.label}
      className={`mr-px flex h-full w-12 flex-col items-center ${item.state === "active" ? "bg-[#353d3f]" : "px-1"}`}
    >
      <span className="flex flex-1 items-center">{item.art}</span>
      <span className={`-mt-[2px] h-[2px] w-full ${item.state ? "bg-[#76b9ed]" : ""}`} />
    </button>
  ));
}

function Taskbar() {
  return (
    <footer className="flex h-10 shrink-0 items-center bg-[#020b0e] text-white">
      <button type="button" aria-label="开始" className="flex h-full w-12 shrink-0 items-center justify-center bg-black">
        <FaWindows className="h-4 w-4" />
      </button>
      <label className="flex h-full w-[344px] shrink-0 items-center bg-[#333] pl-[9px]">
        <span className="mr-[6px] h-[21px] w-[21px] shrink-0 rounded-full border-3 border-white" />
        <input aria-label="搜索" placeholder="在这里输入你要搜索的内容" className="min-w-0 flex-1 bg-transparent text-sm outline-none placeholder:text-[#989898]" />
        <Mic size={18} strokeWidth={1} className="mr-3 text-[#bbb]" />
      </label>
      <nav className="ml-[2px] flex h-full shrink-0 gap-1">
        <div className="flex">
          <TaskButtons from={0} to={2} />
        </div>
        <div className="flex">
          <TaskButtons from={2} to={9} />
        </div>
      </nav>
      <div className="ml-auto flex h-full shrink-0 items-center text-[12px] leading-[17px]">
        <div className="mr-[18px] text-center">
          <div>74%</div>
          <div>CPU使用</div>
        </div>
        <ChevronUp size={16} strokeWidth={1.5} className="mr-[6px]" />
        <svg viewBox="0 0 18 12" className="mr-[10px] h-3 w-[18px]">
          <path d="M5.500 3.500h10v7h-10z" fill="none" stroke="#fff" />
          <path d="M9 5h5v4H9zM16 5h1.500v4H16zM1 3h5v3H4v4H3V6H1zM2 0v3M5 0v3" fill="#fff" stroke="#fff" strokeWidth="0.500" />
        </svg>
        <svg viewBox="0 0 16 16" className="mr-[5px] h-4 w-4">
          <path d="M2 14A12 12 0 0 1 14 3M5 14A9 9 0 0 1 14 6M8 14a6 6 0 0 1 6-5" stroke="#ddd" fill="none" />
          <circle cx="12.500" cy="13" r="1.500" fill="#fff" />
        </svg>
        <Volume2 size={17} strokeWidth={1.3} className="mr-2" />
        <span className="mr-[14px] text-sm">中</span>
        <SogouLogo className="mr-[18px] h-4 w-4" />
        <div className="mr-[18px] text-center">
          <div>21:00</div>
          <div>2017/6/27</div>
        </div>
        <svg viewBox="0 0 18 18" className="mr-5 h-[18px] w-[18px]">
          <path d="M1.500 1.500h15v11h-4v4l-4-4h-7z" stroke="#fff" fill="none" />
        </svg>
        <span className="mr-1 h-full border-l border-[#555]" />
      </div>
    </footer>
  );
}

function StatusCell({ className, children }: { className: string; children?: ReactNode }) {
  return (
    <div className={`mr-[3px] h-5 border border-[#d4d4d4] bg-gradient-to-b from-white to-[#f0f0f0] leading-[18px] whitespace-pre ${className}`}>{children}</div>
  );
}

export default function App() {
  return (
    <div className="relative flex h-screen flex-col overflow-hidden bg-[#f0f0f0] font-['Noto_Sans','Noto_Sans_CJK_SC',sans-serif] text-[12px] leading-4 whitespace-nowrap text-black">
      <header className="flex h-[23px] shrink-0 items-center bg-white pl-[2px]">
        <AppLogo className="mr-[5px] h-4 w-4" />
        <h1 className="flex-1">
          广联达BIM钢筋算量软件 <span className="text-[13px]">GGJ2013 - [C:\Users\Administrator.PC-20141127NRHM\Desktop\</span>白龙村-2017-06-10-17-38-02(2168版).GGJ12]
        </h1>
        <button type="button" aria-label="最小化" className="w-[46px] pl-2"><Minus size={14} strokeWidth={1.5} /></button>
        <button type="button" aria-label="还原" className="w-[46px] pl-[6px]"><Copy size={12} strokeWidth={2} className="-scale-x-100" /></button>
        <button type="button" aria-label="关闭" className="w-[35px] pl-1"><X size={15} strokeWidth={1.5} /></button>
      </header>

      <nav className="flex h-7 shrink-0 items-center">
        <div className="flex gap-[11px] pl-[7px]">
          {menus.map((m) => (
            <button type="button" key={m}>{m}</button>
          ))}
        </div>
        <div className="ml-2 flex">
          <Tool icon="change" label="新建变更" arrow />
          <Tool icon="guang" label="广小二" />
        </div>
        <Bar className="ml-auto w-[188px] justify-center text-[#336600]">多边形编辑器的网格尺..</Bar>
        <Bar className="ml-[2px] w-[240px]">
          <Tool icon="user" label="13907298339" arrow />
          <span className="ml-2">造价豆:0</span>
          <FaBell className="ml-2 h-[15px] w-[15px] text-[#2a8cf0]" />
          <span className="flex-1" />
          <More />
        </Bar>
      </nav>

      <div className="mb-1 flex shrink-0 pt-[3px]">
        <Bar className="w-[152px] pl-[5px]">
          <Icon name="newfile" />
          <span className="ml-[7px]" />
          <Icon name="open" />
          <Caret className="ml-[5px] w-[9px]" />
          <span className="ml-[5px]" />
          <Icon name="save" />
          <span className="ml-[2px]" />
          <Sep />
          <span className="ml-1" />
          <Icon name="undo" />
          <Caret className="ml-[5px] w-[9px]" />
          <span className="flex-1" />
          <More />
        </Bar>
        <Bar className="ml-px w-[548px]">
          <Tool icon="define" label="定义" />
          <Tool icon="sigma" label="汇总计算" />
          <Tool icon="cloudcheck" label="云检查" />
          <Tool icon="slab" label="平齐板顶" dim />
          <Tool icon="find" label="查找图元" />
          <button type="button" aria-label="查看" className="px-1"><Icon name="glasses" /></button>
          <button type="button" disabled className="ml-auto pr-10 text-[#8d8d8d]">选择</button>
          <More />
        </Bar>
        <Bar className="ml-[3px] min-w-0 flex-1">
          <Tool icon="cube" label="三维" arrow white />
          <Tool icon="top" label="俯视" arrow />
          <Tool icon="orbit" label="动态观察" on />
          <Tool icon="part3d" label="局部三维" dim />
          <Sep />
          <Tool icon="full" label="全屏" />
          <Tool icon="zoom" label="缩放" arrow />
          <Tool icon="pan" label="平移" arrow />
          <Tool icon="screenrot" label="屏幕旋转" tight />
          <Sep />
          <Tool icon="floors" label="选择楼层" />
          <span className="flex-1" />
          <More />
        </Bar>
      </div>

      <main className="flex min-h-0 flex-1">
        <Sidebar />
        <section className="flex min-w-0 flex-1 flex-col">
          <div className="flex shrink-0">
            <Bar>
              <Grip />
              <Tool icon="broom" label="删除" />
              <Sep />
              <Tool icon="copy" label="复制" />
              <Tool icon="mirror" label="镜像" />
              <Sep />
              <Tool icon="move" label="移动" />
              <Tool icon="rotate" label="旋转" />
              <Sep />
              <Tool icon="extend" label="延伸" />
              <Tool icon="trim" label="修剪" />
              <Sep />
              <Tool icon="break" label="打断" />
              <Tool icon="merge" label="合并" />
              <Tool icon="split" label="分割" dim />
              <Sep />
              <Tool icon="align" label="对齐" tight />
              <Tool icon="offset" label="偏移" />
              <Tool icon="stretch" label="拉伸" />
              <Sep />
              <Tool icon="grip" label="设置夹点" dim />
            </Bar>
          </div>
          <div className="mt-px flex shrink-0">
            <Bar className="w-[567px]">
              <Grip />
              <Combo label="楼层" value="基础层" className="ml-px w-[57px]" />
              <Combo label="构件类型" value="自定义" className="w-[69px]" />
              <Combo label="构件" value="自定义线" className="w-[69px]" />
              <Combo label="名称" value="ZDYX-19" className="w-[69px]" />
              <Sep />
              <Tool icon="props" label="属性" />
              <Tool icon="rebar" label="编辑钢筋" />
              <Tool icon="list" label="构件列表" />
              <Tool icon="pick" label="拾取构件" />
            </Bar>
            <Bar className="ml-[74px]">
              <Grip />
              <Tool icon="twopt" label="两点" />
              <Tool icon="parallel" label="平行" />
              <Tool icon="ptangle" label="点角" arrow />
              <Tool icon="threeaux" label="三点辅轴" arrow />
              <Tool icon="broom" label="删除辅轴" />
              <Tool icon="dims" label="尺寸标注" arrow />
            </Bar>
          </div>
          <div className="mt-[3px] flex h-[22px] shrink-0 pl-[413px]">
            <Bar className="w-[31px]"><Grip /></Bar>
          </div>
          <div className="mt-1 flex shrink-0 pl-[11px]">
            <Bar>
              <Grip />
              <Tool icon="cursor" label="选择" arrow />
              <Sep />
              <Tool icon="line" label="直线" />
              <Tool icon="addlen" label="点加长度" />
              <Tool icon="arc" label="三点画弧" arrow />
              <Combo label="画弧方式" value="" className="w-[58px]" />
              <Tool icon="rect" label="矩形" />
              <Sep />
              <Tool icon="smart" label="智能布置" tight />
            </Bar>
          </div>
          <Scene />
          <div className="mb-[2px] flex shrink-0">
            <Bar>
              <Grip />
              <Tool icon="ortho" label="正交" />
              <Tool icon="snap" label="对象捕捉" on />
              <Tool icon="dyn" label="动态输入" on />
            </Bar>
            <Bar className="ml-[2px]">
              <Grip />
              <Tool icon="cross" label="交点" />
              <Tool icon="perp" label="垂点" on />
              <Tool icon="mid" label="中点" on />
              <Tool icon="vertex" label="顶点" />
              <Tool icon="coord" label="坐标" />
            </Bar>
            <Bar className="ml-[2px] pr-1 text-[#8a8a8a]">
              <Grip />
              <div className="text-black">
                <Combo label="偏移方式" value="不偏移" className="w-[58px]" />
              </div>
              <Sep />
              <span className="w-[18px]">X=</span>
              <Spin label="X" value="0" className="w-[58px]" />
              <span className="ml-[2px] w-[26px]">mm</span>
              <span className="w-[18px]">Y=</span>
              <Spin label="Y" value="0" className="w-[58px]" />
              <span className="ml-[2px] w-6">mm</span>
              <Sep />
              <label className="flex items-center gap-[9px] text-black">
                <input type="checkbox" className="h-[11px] w-[11px] appearance-none border border-[#a0a0a0] bg-white" />
                旋转
              </label>
              <Spin label="旋转角度" value="0.000" className="ml-1 w-[68px]" />
              <span className="ml-[2px]">°</span>
            </Bar>
          </div>
        </section>
      </main>

      <div className="flex shrink-0 bg-[#f8f8f8] pt-[3px] font-['Liberation_Serif','Noto_Sans_CJK_SC',serif]">
        <StatusCell className="w-[147px]">X=32676 Y=7155</StatusCell>
        <StatusCell className="w-[77px]">层高:3.55m</StatusCell>
        <StatusCell className="w-[97px]">底标高:-3.58m</StatusCell>
        <StatusCell className="w-[47px]">1(1)</StatusCell>
        <StatusCell className="flex-1" />
        <StatusCell className="w-[67px]">460.5 FPS</StatusCell>
      </div>

      <Taskbar />
      <SpeedBall />
      <ImeBar />
    </div>
  );
}
